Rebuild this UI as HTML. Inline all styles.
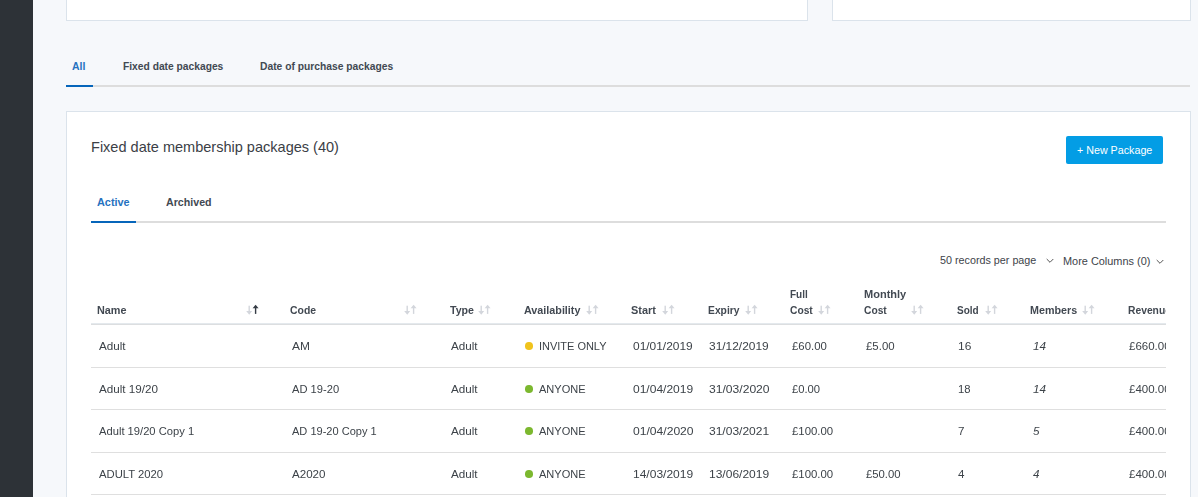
<!DOCTYPE html>
<html><head><meta charset="utf-8"><title>Membership packages</title>
<style>
*{box-sizing:border-box;margin:0;padding:0}
html,body{width:1198px;height:497px;overflow:hidden;background:#f6f8fb;font-family:"Liberation Sans",sans-serif}
.abs{position:absolute}
.t{position:absolute;white-space:nowrap;line-height:20px;transform-origin:0 50%}
.card{position:absolute;background:#fff;border:1px solid #dbe3eb}
#clip{will-change:transform;position:absolute;left:91px;top:270px;width:1075px;height:227px;overflow:hidden}
#in{position:absolute;left:-91px;top:-270px;width:1198px;height:497px}
.line{position:absolute}
.dot{position:absolute;width:7.6px;height:7.6px;border-radius:50%}
</style></head><body>
<div class="abs" style="left:0;top:0;width:33px;height:497px;background:#2d3237"></div>
<div class="card" style="left:66px;top:-10px;width:742px;height:31px"></div>
<div class="card" style="left:832px;top:-10px;width:359px;height:31px"></div>
<div class="line" style="left:66px;top:85px;width:1124px;height:2px;background:#dddddd"></div>
<div class="line" style="left:66px;top:85px;width:27px;height:2px;background:#0665ba"></div>
<div class="card" style="left:66px;top:111px;width:1125px;height:400px"></div>
<div class="abs" style="left:1066px;top:136px;width:97px;height:28px;background:#039de5;border-radius:2px"></div>
<div class="line" style="left:91px;top:221px;width:1075px;height:2px;background:#dddddd"></div>
<div class="line" style="left:91px;top:221px;width:45px;height:2px;background:#0665ba"></div>
<svg class="abs" style="left:1045.6px;top:258px" width="8" height="6" viewBox="0 0 8 6"><path d="M0.7 1L4 4.3L7.3 1" fill="none" stroke="#555" stroke-width="1"/></svg>
<svg class="abs" style="left:1155.6px;top:259px" width="8" height="6" viewBox="0 0 8 6"><path d="M0.7 1L4 4.3L7.3 1" fill="none" stroke="#555" stroke-width="1"/></svg>

<div class="t" style="left:72px;top:56.18px;font-size:11.03px;color:#2672c0;transform:scaleX(0.947);font-weight:bold">All</div>
<div class="t" style="left:123px;top:56.18px;font-size:11.03px;color:#424952;transform:scaleX(0.931);font-weight:bold">Fixed date packages</div>
<div class="t" style="left:260px;top:56.18px;font-size:11.03px;color:#424952;transform:scaleX(0.933);font-weight:bold">Date of purchase packages</div>
<div class="t" style="left:91px;top:136.88px;font-size:14.78px;color:#3b4046;transform:scaleX(0.984)">Fixed date membership packages (40)</div>
<div class="t" style="left:1077px;top:140.18px;font-size:11.03px;color:#ffffff;transform:scaleX(0.972)">+ New Package</div>
<div class="t" style="left:97px;top:192.18px;font-size:11.03px;color:#2672c0;transform:scaleX(0.986);font-weight:bold">Active</div>
<div class="t" style="left:166px;top:192.18px;font-size:11.03px;color:#424952;transform:scaleX(0.967);font-weight:bold">Archived</div>
<div class="t" style="left:940px;top:250.18px;font-size:11.03px;color:#3d4349;transform:scaleX(0.977)">50 records per page</div>
<div class="t" style="left:1062.5px;top:251.18px;font-size:11.03px;color:#3d4349;transform:scaleX(0.991)">More Columns (0)</div>
<div id="clip"><div id="in">
<div class="t" style="left:97px;top:300.18px;font-size:11.03px;color:#424952;transform:scaleX(0.983);font-weight:bold">Name</div>
<div class="t" style="left:290px;top:300.18px;font-size:11.03px;color:#424952;transform:scaleX(0.946);font-weight:bold">Code</div>
<div class="t" style="left:450px;top:300.18px;font-size:11.03px;color:#424952;transform:scaleX(0.964);font-weight:bold">Type</div>
<div class="t" style="left:524px;top:300.18px;font-size:11.03px;color:#424952;transform:scaleX(0.977);font-weight:bold">Availability</div>
<div class="t" style="left:631px;top:300.18px;font-size:11.03px;color:#424952;transform:scaleX(0.991);font-weight:bold">Start</div>
<div class="t" style="left:707.5px;top:300.18px;font-size:11.03px;color:#424952;transform:scaleX(0.936);font-weight:bold">Expiry</div>
<div class="t" style="left:790px;top:300.18px;font-size:11.03px;color:#424952;transform:scaleX(0.931);font-weight:bold">Cost</div>
<div class="t" style="left:864px;top:300.18px;font-size:11.03px;color:#424952;transform:scaleX(0.931);font-weight:bold">Cost</div>
<div class="t" style="left:957px;top:300.18px;font-size:11.03px;color:#424952;transform:scaleX(0.908);font-weight:bold">Sold</div>
<div class="t" style="left:1029.7px;top:300.18px;font-size:11.03px;color:#424952;transform:scaleX(0.974);font-weight:bold">Members</div>
<div class="t" style="left:1127.5px;top:300.18px;font-size:11.03px;color:#424952;transform:scaleX(0.935);font-weight:bold">Revenue</div>
<div class="t" style="left:790px;top:284.18px;font-size:11.03px;color:#424952;transform:scaleX(0.909);font-weight:bold">Full</div>
<div class="t" style="left:864px;top:284.18px;font-size:11.03px;color:#424952;transform:scaleX(1.0);font-weight:bold">Monthly</div>
<div class="t" style="left:98.6px;top:336.18px;font-size:11.03px;color:#3d4349;transform:scaleX(1.06)">Adult</div>
<div class="t" style="left:292px;top:336.18px;font-size:11.03px;color:#3d4349;transform:scaleX(1.087)">AM</div>
<div class="t" style="left:451px;top:336.18px;font-size:11.03px;color:#3d4349;transform:scaleX(1.06)">Adult</div>
<div class="t" style="left:539px;top:336.18px;font-size:11.03px;color:#3d4349;transform:scaleX(0.996)">INVITE ONLY</div>
<div class="t" style="left:633px;top:336.18px;font-size:11.03px;color:#3d4349;transform:scaleX(1.082)">01/01/2019</div>
<div class="t" style="left:709px;top:336.18px;font-size:11.03px;color:#3d4349;transform:scaleX(1.082)">31/12/2019</div>
<div class="t" style="left:791.8px;top:336.18px;font-size:11.03px;color:#3d4349;transform:scaleX(1.032)">£60.00</div>
<div class="t" style="left:865.5px;top:336.18px;font-size:11.03px;color:#3d4349;transform:scaleX(1.037)">£5.00</div>
<div class="t" style="left:958px;top:336.18px;font-size:11.03px;color:#3d4349;transform:scaleX(1.087)">16</div>
<div class="t" style="left:1032.5px;top:336.18px;font-size:11.03px;color:#3d4349;transform:scaleX(1.063);font-style:italic">14</div>
<div class="t" style="left:1129px;top:336.18px;font-size:11.03px;color:#3d4349;transform:scaleX(1.044)">£660.00</div>
<div class="t" style="left:98.6px;top:379.18px;font-size:11.03px;color:#3d4349;transform:scaleX(1.059)">Adult 19/20</div>
<div class="t" style="left:292px;top:379.18px;font-size:11.03px;color:#3d4349;transform:scaleX(1.012)">AD 19-20</div>
<div class="t" style="left:451px;top:379.18px;font-size:11.03px;color:#3d4349;transform:scaleX(1.06)">Adult</div>
<div class="t" style="left:539px;top:379.18px;font-size:11.03px;color:#3d4349;transform:scaleX(1.002)">ANYONE</div>
<div class="t" style="left:633px;top:379.18px;font-size:11.03px;color:#3d4349;transform:scaleX(1.091)">01/04/2019</div>
<div class="t" style="left:709px;top:379.18px;font-size:11.03px;color:#3d4349;transform:scaleX(1.099)">31/03/2020</div>
<div class="t" style="left:791.8px;top:379.18px;font-size:11.03px;color:#3d4349;transform:scaleX(1.019)">£0.00</div>
<div class="t" style="left:958px;top:379.18px;font-size:11.03px;color:#3d4349;transform:scaleX(1.022)">18</div>
<div class="t" style="left:1032.5px;top:379.18px;font-size:11.03px;color:#3d4349;transform:scaleX(1.063);font-style:italic">14</div>
<div class="t" style="left:1129px;top:379.18px;font-size:11.03px;color:#3d4349;transform:scaleX(1.044)">£400.00</div>
<div class="t" style="left:98.6px;top:421.18px;font-size:11.03px;color:#3d4349;transform:scaleX(1.015)">Adult 19/20 Copy 1</div>
<div class="t" style="left:292px;top:421.18px;font-size:11.03px;color:#3d4349;transform:scaleX(1.002)">AD 19-20 Copy 1</div>
<div class="t" style="left:451px;top:421.18px;font-size:11.03px;color:#3d4349;transform:scaleX(1.06)">Adult</div>
<div class="t" style="left:539px;top:421.18px;font-size:11.03px;color:#3d4349;transform:scaleX(1.002)">ANYONE</div>
<div class="t" style="left:633px;top:421.18px;font-size:11.03px;color:#3d4349;transform:scaleX(1.099)">01/04/2020</div>
<div class="t" style="left:709px;top:421.18px;font-size:11.03px;color:#3d4349;transform:scaleX(1.091)">31/03/2021</div>
<div class="t" style="left:791.8px;top:421.18px;font-size:11.03px;color:#3d4349;transform:scaleX(1.033)">£100.00</div>
<div class="t" style="left:958px;top:421.18px;font-size:11.03px;color:#3d4349;transform:scaleX(1.059)">7</div>
<div class="t" style="left:1032.5px;top:421.18px;font-size:11.03px;color:#3d4349;transform:scaleX(1.059);font-style:italic">5</div>
<div class="t" style="left:1129px;top:421.18px;font-size:11.03px;color:#3d4349;transform:scaleX(1.044)">£400.00</div>
<div class="t" style="left:98.6px;top:464.18px;font-size:11.03px;color:#3d4349;transform:scaleX(1.023)">ADULT 2020</div>
<div class="t" style="left:292px;top:464.18px;font-size:11.03px;color:#3d4349;transform:scaleX(1.052)">A2020</div>
<div class="t" style="left:451px;top:464.18px;font-size:11.03px;color:#3d4349;transform:scaleX(1.06)">Adult</div>
<div class="t" style="left:539px;top:464.18px;font-size:11.03px;color:#3d4349;transform:scaleX(1.002)">ANYONE</div>
<div class="t" style="left:633px;top:464.18px;font-size:11.03px;color:#3d4349;transform:scaleX(1.091)">14/03/2019</div>
<div class="t" style="left:709px;top:464.18px;font-size:11.03px;color:#3d4349;transform:scaleX(1.091)">13/06/2019</div>
<div class="t" style="left:791.8px;top:464.18px;font-size:11.03px;color:#3d4349;transform:scaleX(1.033)">£100.00</div>
<div class="t" style="left:865.5px;top:464.18px;font-size:11.03px;color:#3d4349;transform:scaleX(1.026)">£50.00</div>
<div class="t" style="left:958px;top:464.18px;font-size:11.03px;color:#3d4349;transform:scaleX(1.059)">4</div>
<div class="t" style="left:1032.5px;top:464.18px;font-size:11.03px;color:#3d4349;transform:scaleX(1.059);font-style:italic">4</div>
<div class="t" style="left:1129px;top:464.18px;font-size:11.03px;color:#3d4349;transform:scaleX(1.044)">£400.00</div>
<svg class="abs" style="left:246px;top:304px" width="13" height="12" viewBox="0 0 13 12"><g fill="#d3d6dc"><rect x="2.5" y="1.7" width="1.4" height="6"/><path d="M0.2 7.1h6L3.2 10.8z"/></g><g fill="#353c45"><rect x="8.9" y="3.6" width="1.4" height="6.3"/><path d="M6.6 4.2h6L9.6 0.7z"/></g></svg>
<svg class="abs" style="left:404px;top:304px" width="13" height="12" viewBox="0 0 13 12"><g fill="#d3d6dc"><rect x="2.5" y="1.7" width="1.4" height="6"/><path d="M0.2 7.1h6L3.2 10.8z"/></g><g fill="#d3d6dc"><rect x="8.9" y="3.6" width="1.4" height="6.3"/><path d="M6.6 4.2h6L9.6 0.7z"/></g></svg>
<svg class="abs" style="left:478px;top:304px" width="13" height="12" viewBox="0 0 13 12"><g fill="#d3d6dc"><rect x="2.5" y="1.7" width="1.4" height="6"/><path d="M0.2 7.1h6L3.2 10.8z"/></g><g fill="#d3d6dc"><rect x="8.9" y="3.6" width="1.4" height="6.3"/><path d="M6.6 4.2h6L9.6 0.7z"/></g></svg>
<svg class="abs" style="left:585.5px;top:304px" width="13" height="12" viewBox="0 0 13 12"><g fill="#d3d6dc"><rect x="2.5" y="1.7" width="1.4" height="6"/><path d="M0.2 7.1h6L3.2 10.8z"/></g><g fill="#d3d6dc"><rect x="8.9" y="3.6" width="1.4" height="6.3"/><path d="M6.6 4.2h6L9.6 0.7z"/></g></svg>
<svg class="abs" style="left:662px;top:304px" width="13" height="12" viewBox="0 0 13 12"><g fill="#d3d6dc"><rect x="2.5" y="1.7" width="1.4" height="6"/><path d="M0.2 7.1h6L3.2 10.8z"/></g><g fill="#d3d6dc"><rect x="8.9" y="3.6" width="1.4" height="6.3"/><path d="M6.6 4.2h6L9.6 0.7z"/></g></svg>
<svg class="abs" style="left:744.7px;top:304px" width="13" height="12" viewBox="0 0 13 12"><g fill="#d3d6dc"><rect x="2.5" y="1.7" width="1.4" height="6"/><path d="M0.2 7.1h6L3.2 10.8z"/></g><g fill="#d3d6dc"><rect x="8.9" y="3.6" width="1.4" height="6.3"/><path d="M6.6 4.2h6L9.6 0.7z"/></g></svg>
<svg class="abs" style="left:818.4px;top:304px" width="13" height="12" viewBox="0 0 13 12"><g fill="#d3d6dc"><rect x="2.5" y="1.7" width="1.4" height="6"/><path d="M0.2 7.1h6L3.2 10.8z"/></g><g fill="#d3d6dc"><rect x="8.9" y="3.6" width="1.4" height="6.3"/><path d="M6.6 4.2h6L9.6 0.7z"/></g></svg>
<svg class="abs" style="left:911px;top:304px" width="13" height="12" viewBox="0 0 13 12"><g fill="#d3d6dc"><rect x="2.5" y="1.7" width="1.4" height="6"/><path d="M0.2 7.1h6L3.2 10.8z"/></g><g fill="#d3d6dc"><rect x="8.9" y="3.6" width="1.4" height="6.3"/><path d="M6.6 4.2h6L9.6 0.7z"/></g></svg>
<svg class="abs" style="left:984.8px;top:304px" width="13" height="12" viewBox="0 0 13 12"><g fill="#d3d6dc"><rect x="2.5" y="1.7" width="1.4" height="6"/><path d="M0.2 7.1h6L3.2 10.8z"/></g><g fill="#d3d6dc"><rect x="8.9" y="3.6" width="1.4" height="6.3"/><path d="M6.6 4.2h6L9.6 0.7z"/></g></svg>
<svg class="abs" style="left:1082.4px;top:304px" width="13" height="12" viewBox="0 0 13 12"><g fill="#d3d6dc"><rect x="2.5" y="1.7" width="1.4" height="6"/><path d="M0.2 7.1h6L3.2 10.8z"/></g><g fill="#d3d6dc"><rect x="8.9" y="3.6" width="1.4" height="6.3"/><path d="M6.6 4.2h6L9.6 0.7z"/></g></svg>
<svg class="abs" style="left:1190px;top:304px" width="13" height="12" viewBox="0 0 13 12"><g fill="#d3d6dc"><rect x="2.5" y="1.7" width="1.4" height="6"/><path d="M0.2 7.1h6L3.2 10.8z"/></g><g fill="#d3d6dc"><rect x="8.9" y="3.6" width="1.4" height="6.3"/><path d="M6.6 4.2h6L9.6 0.7z"/></g></svg>
<div class="line" style="left:91px;top:323px;width:1100px;height:1px;background:#e4e9ed"></div>
<div class="line" style="left:91px;top:324px;width:1100px;height:1px;background:#dcdee0"></div>
<div class="dot" style="left:525.2px;top:342.2px;background:#f0c31d"></div>
<div class="line" style="left:91px;top:367px;width:1100px;height:1px;background:#dfdfdf"></div>
<div class="dot" style="left:525.2px;top:385.2px;background:#7cb82f"></div>
<div class="line" style="left:91px;top:409px;width:1100px;height:1px;background:#dfdfdf"></div>
<div class="dot" style="left:525.2px;top:427.2px;background:#7cb82f"></div>
<div class="line" style="left:91px;top:452px;width:1100px;height:1px;background:#dfdfdf"></div>
<div class="dot" style="left:525.2px;top:470.2px;background:#7cb82f"></div>
<div class="line" style="left:91px;top:494px;width:1100px;height:1px;background:#dfdfdf"></div>
</div></div></body></html>
